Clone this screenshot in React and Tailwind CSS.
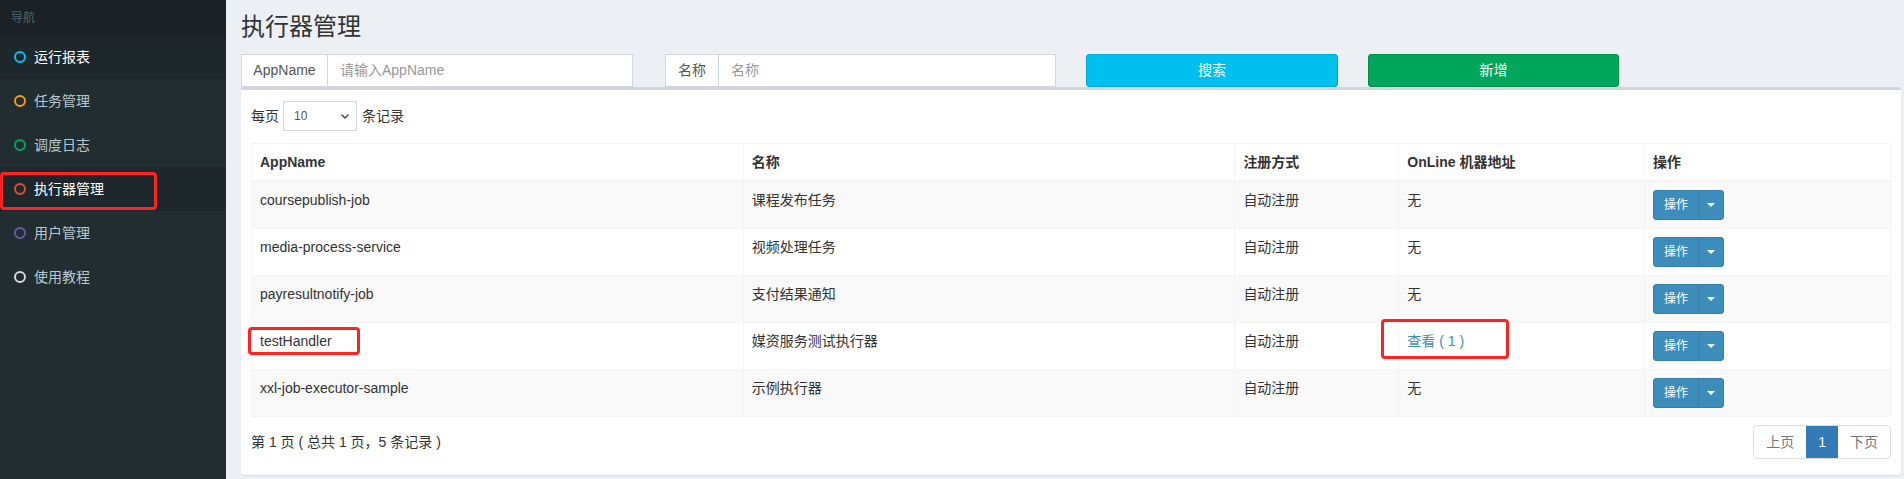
import React from "react";

const nav = [
  { t: "运行报表", ring: "border-[#00c0ef]", active: true },
  { t: "任务管理", ring: "border-[#f39c12]" },
  { t: "调度日志", ring: "border-[#00a65a]" },
  { t: "执行器管理", ring: "border-[#dd4b39]", active: true, boxed: true },
  { t: "用户管理", ring: "border-[#605ca8]" },
  { t: "使用教程", ring: "border-[#d2d6de]" },
];

const rows = [
  { app: "coursepublish-job", name: "课程发布任务", addr: "无" },
  { app: "media-process-service", name: "视频处理任务", addr: "无" },
  { app: "payresultnotify-job", name: "支付结果通知", addr: "无" },
  { app: "testHandler", name: "媒资服务测试执行器", addr: "link", mark: true },
  { app: "xxl-job-executor-sample", name: "示例执行器", addr: "无" },
];

function ActionBtn() {
  return (
    <div className="flex h-[30px] w-[71px] rounded-[3px] border border-[#367fa9] bg-[#3c8dbc] text-white text-[12px]">
      <div className="flex w-[45px] items-center justify-center border-r border-[#367fa9]">操作</div>
      <div className="flex flex-1 items-center justify-center">
        <div className="h-0 w-0 border-l-[4px] border-r-[4px] border-t-[4px] border-l-transparent border-r-transparent border-t-white" />
      </div>
    </div>
  );
}

export default function App() {
  return (
    <div className="flex min-h-[479px] w-[1904px] font-['Liberation_Sans','Noto_Sans_CJK_SC',sans-serif] text-[14px] text-[#333]">
      <aside className="w-[226px] shrink-0 bg-[#222d32]">
        <div className="flex h-[35px] items-center bg-[#1a2226] pl-[11px] text-[12px] text-[#4b646f]">导航</div>
        {nav.map((n) => (
          <div
            key={n.t}
            className={`relative flex h-[44px] items-center pl-[14px] ${n.active ? "bg-[#1e282c] text-white" : "text-[#b8c7ce]"}`}
          >
            <span className={`h-[12px] w-[12px] rounded-full border-2 ${n.ring}`} />
            <span className="ml-[8px]">{n.t}</span>
            {n.boxed && (
              <div className="absolute left-0 top-[5px] h-[38px] w-[157px] rounded-[4px] border-[3px] border-[#ff2222]" />
            )}
          </div>
        ))}
      </aside>

      <main className="flex-1 bg-[#ecf0f5] pl-[15px] pr-[3px] pt-[14px]">
        <h1 className="mb-[14px] h-[26px] text-[24px] leading-[26px] text-[#333]">执行器管理</h1>

        <div className="flex h-[33px]">
          <div className="flex w-[392px] border border-[#d2d6de] bg-white">
            <div className="flex w-[86px] items-center justify-center border-r border-[#d2d6de] text-[#555]">AppName</div>
            <div className="flex flex-1 items-center pl-[12px] text-[#999]">请输入AppName</div>
          </div>
          <div className="ml-[32px] flex w-[391px] border border-[#d2d6de] bg-white">
            <div className="flex w-[53px] items-center justify-center border-r border-[#d2d6de] text-[#555]">名称</div>
            <div className="flex flex-1 items-center pl-[12px] text-[#999]">名称</div>
          </div>
          <div className="ml-[30px] flex w-[252px] items-center justify-center rounded-[3px] border border-[#00acd6] bg-[#00c0ef] text-white">搜索</div>
          <div className="ml-[30px] flex w-[251px] items-center justify-center rounded-[3px] border border-[#008d4c] bg-[#00a65a] text-white">新增</div>
        </div>

        <div className="rounded-[3px] border-t-[3px] border-[#d2d6de] bg-white px-[10px] pb-[16px] pt-[11px] shadow-[0_1px_1px_rgba(0,0,0,0.1)]">
          <div className="flex h-[30px] items-center">
            <span>每页</span>
            <div className="ml-[4px] flex h-[30px] w-[74px] items-center justify-between border border-[#d2d6de] pl-[10px] pr-[6px] text-[12px] text-[#555]">
              <span>10</span>
              <svg width="10" height="10" viewBox="0 0 10 10">
                <path d="M1.5 3.5 L5 7 L8.5 3.5" fill="none" stroke="#444" strokeWidth="1.4" />
              </svg>
            </div>
            <span className="ml-[5px]">条记录</span>
          </div>

          <table className="mt-[12px] w-full table-fixed border-collapse border border-[#f4f4f4]">
            <colgroup>
              <col className="w-[30%]" />
              <col className="w-[30%]" />
              <col className="w-[10%]" />
              <col className="w-[15%]" />
              <col className="w-[15%]" />
            </colgroup>
            <thead>
              <tr className="border-b-2 border-[#f4f4f4]">
                {["AppName", "名称", "注册方式", "OnLine 机器地址", "操作"].map((h) => (
                  <th key={h} className="border border-b-2 border-[#f4f4f4] p-[8px] text-left align-top font-bold leading-[20px]">
                    {h}
                  </th>
                ))}
              </tr>
            </thead>
            <tbody>
              {rows.map((r, i) => (
                <tr key={r.app} className={i % 2 === 0 ? "bg-[#f9f9f9]" : "bg-white"}>
                  <td className="relative border border-[#f4f4f4] p-[8px] align-top leading-[20px]">
                    {r.app}
                    {r.mark && (
                      <div className="absolute left-[-4px] top-[4px] h-[28px] w-[112px] rounded-[4px] border-[3px] border-[#ff2222]" />
                    )}
                  </td>
                  <td className="border border-[#f4f4f4] p-[8px] align-top leading-[20px]">{r.name}</td>
                  <td className="border border-[#f4f4f4] p-[8px] align-top leading-[20px]">自动注册</td>
                  <td className="relative border border-[#f4f4f4] p-[8px] align-top leading-[20px]">
                    {r.addr === "link" ? (
                      <>
                        <span className="text-[#3c8dbc]">查看 ( 1 )</span>
                        <div className="absolute left-[-18px] top-[-4px] h-[40px] w-[128px] rounded-[4px] border-[3px] border-[#ff2222]" />
                      </>
                    ) : (
                      r.addr
                    )}
                  </td>
                  <td className="border border-[#f4f4f4] p-[8px] align-top">
                    <ActionBtn />
                  </td>
                </tr>
              ))}
            </tbody>
          </table>

          <div className="mt-[8px] flex items-center justify-between">
            <span>第 1 页 ( 总共 1 页，5 条记录 )</span>
            <div className="flex h-[34px] overflow-hidden rounded-[4px] border border-[#ddd] text-[#777]">
              <div className="flex items-center px-[12px]">上页</div>
              <div className="flex items-center bg-[#337ab7] px-[12px] text-white">1</div>
              <div className="flex items-center px-[12px]">下页</div>
            </div>
          </div>
        </div>
      </main>
    </div>
  );
}
